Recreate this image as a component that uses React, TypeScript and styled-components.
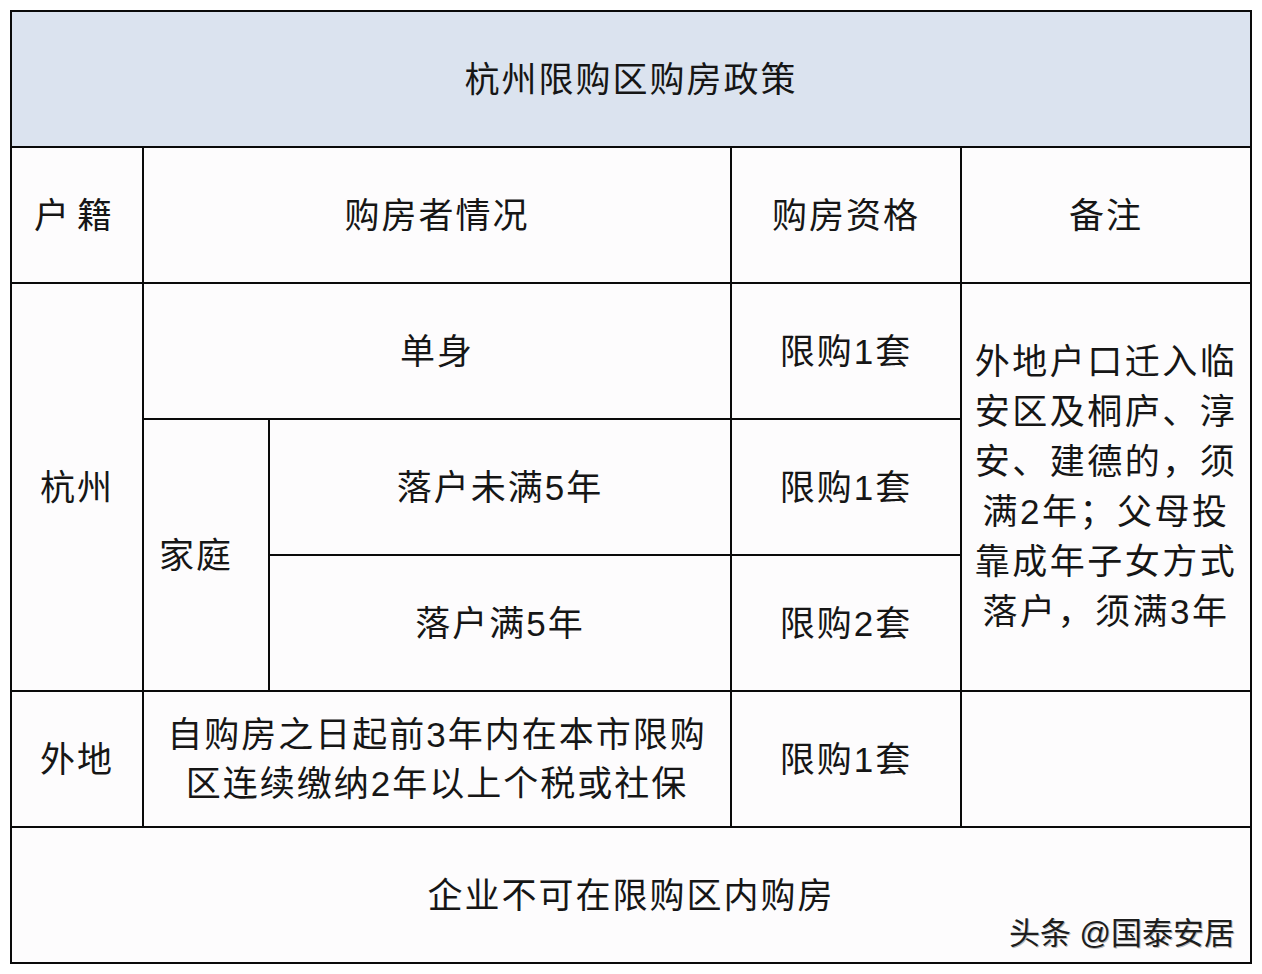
import React from "react";
import styled, { createGlobalStyle } from "styled-components";

const GlobalStyle = createGlobalStyle`
  html, body {
    margin: 0;
    padding: 0;
    background: #ffffff;
  }
  body {
    font-family: "Liberation Sans", "Noto Sans CJK SC", sans-serif;
    color: #161616;
  }
`;

const Page = styled.div`
  padding: 10px;
  width: 1262px;
  box-sizing: border-box;
`;

const Wrapper = styled.div`
  position: relative;
  width: 1242px;
`;

const Table = styled.div`
  display: grid;
  grid-template-columns: 130px 124px 460px 228px 288px;
  grid-template-rows: repeat(7, 134px);
  gap: 2px;
  padding: 2px;
  background: #0a0a0a;
`;

interface CellProps {
  col: string;
  row: string;
  shaded?: boolean;
  spacing?: number;
  shift?: number;
}

const Cell = styled.div<CellProps>`
  grid-column: ${(p) => p.col};
  grid-row: ${(p) => p.row};
  background: ${(p) => (p.shaded ? "#dbe3ef" : "#fdfcfd")};
  display: flex;
  align-items: center;
  justify-content: center;
  text-align: center;
  font-size: 35px;
  letter-spacing: ${(p) => p.spacing ?? 2}px;
  line-height: 49px;
  padding-right: ${(p) => p.shift ?? 0}px;
`;

const Note = styled.div`
  line-height: 50px;
  letter-spacing: 2.5px;
`;

const Watermark = styled.div`
  position: absolute;
  right: 17px;
  bottom: 15px;
  font-size: 31px;
  line-height: 1;
  color: #1e1e1e;
  text-shadow: 1px 1px 0 #b8b8b8, -1px -1px 0 #ffffff;
  letter-spacing: 0;
`;

const App: React.FC = () => {
  return (
    <Page>
      <GlobalStyle />
      <Wrapper>
        <Table>
          <Cell col="1 / 6" row="1" shaded>
            杭州限购区购房政策
          </Cell>

          <Cell col="1" row="2" spacing={8}>
            户籍
          </Cell>
          <Cell col="2 / 4" row="2">
            购房者情况
          </Cell>
          <Cell col="4" row="2">
            购房资格
          </Cell>
          <Cell col="5" row="2">
            备注
          </Cell>

          <Cell col="1" row="3 / 6">
            杭州
          </Cell>
          <Cell col="2 / 4" row="3">
            单身
          </Cell>
          <Cell col="4" row="3">
            限购1套
          </Cell>
          <Cell col="5" row="3 / 6">
            <Note>
              外地户口迁入临
              <br />
              安区及桐庐、淳
              <br />
              安、建德的，须
              <br />
              满2年；父母投
              <br />
              靠成年子女方式
              <br />
              落户，须满3年
            </Note>
          </Cell>

          <Cell col="2" row="4 / 6" shift={20}>
            家庭
          </Cell>
          <Cell col="3" row="4">
            落户未满5年
          </Cell>
          <Cell col="4" row="4">
            限购1套
          </Cell>
          <Cell col="3" row="5">
            落户满5年
          </Cell>
          <Cell col="4" row="5">
            限购2套
          </Cell>

          <Cell col="1" row="6">
            外地
          </Cell>
          <Cell col="2 / 4" row="6">
            <div>
              自购房之日起前3年内在本市限购
              <br />
              区连续缴纳2年以上个税或社保
            </div>
          </Cell>
          <Cell col="4" row="6">
            限购1套
          </Cell>
          <Cell col="5" row="6" />

          <Cell col="1 / 6" row="7">
            企业不可在限购区内购房
          </Cell>
        </Table>
        <Watermark>头条 @国泰安居</Watermark>
      </Wrapper>
    </Page>
  );
};

export default App;
